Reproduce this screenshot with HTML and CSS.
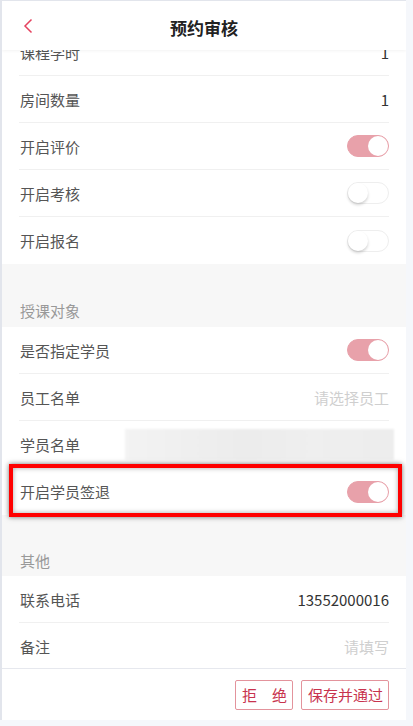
FILE: index.html
```html
<html lang="zh-CN">
  <head>
    <meta charset="UTF-8" />
    <meta name="viewport" content="width=device-width, initial-scale=1.0" />
    <title>预约审核</title>
    <link rel="stylesheet" href="styles.css">
  </head>
  <body>
    <div class="phone">
      <!-- 顶部导航 -->
      <div class="nav">
        <a class="back" href="#" aria-label="返回">
          <svg width="10" height="16" viewBox="0 0 10 16">
            <path d="M8.5 1.5 L2 8 L8.5 14.5" fill="none" stroke="#e5425f" stroke-width="1.5" />
          </svg>
        </a>
        <strong class="title">预约审核</strong>
      </div>

      <div class="scroll">
        <div class="list">
          <div class="group">
            <div class="row"><span class="label">课程学时</span><span class="value">1</span></div>
            <div class="row"><span class="label">房间数量</span><span class="value">1</span></div>
            <div class="row"><span class="label">开启评价</span><span class="switch on"></span></div>
            <div class="row"><span class="label">开启考核</span><span class="switch"></span></div>
            <div class="row"><span class="label">开启报名</span><span class="switch"></span></div>
          </div>

          <div class="group-title first">授课对象</div>
          <div class="group">
            <div class="row"><span class="label">是否指定学员</span><span class="switch on"></span></div>
            <div class="row"><span class="label">员工名单</span><span class="placeholder">请选择员工</span></div>
            <div class="row"><span class="label">学员名单</span><span class="masked"></span></div>
            <div class="row marked"><span class="label">开启学员签退</span><span class="switch on"></span></div>
          </div>

          <div class="group-title">其他</div>
          <div class="group">
            <div class="row"><span class="label">联系电话</span><span class="value">13552000016</span></div>
            <div class="row"><span class="label">备注</span><span class="placeholder">请填写</span></div>
          </div>
        </div>
      </div>

      <!-- 底部操作 -->
      <div class="footer">
        <button class="btn">拒&#12288;绝</button>
        <button class="btn">保存并通过</button>
      </div>
    </div>
  </body>
</html>
```

FILE: styles.css
```css
body {
  margin: 0;
  background: #f5f7fb;
  font-family: "Noto Sans CJK SC", "Noto Sans", sans-serif;
}

.phone {
  box-sizing: border-box;
  width: 406px;
  height: 720px;
  border-left: 2px solid #e2e5ec;
  border-top: 1px solid #e2e5ec;
  background: #f7f7f7;
  display: flex;
  flex-direction: column;
  overflow: hidden;
}

/* 顶部导航 */
.nav {
  position: relative;
  z-index: 2;
  flex: 0 0 49px;
  box-sizing: border-box;
  padding-top: 3px;
  display: flex;
  align-items: center;
  justify-content: center;
  background: #fff;
  box-shadow: 0 1px 3px rgba(0, 0, 0, 0.05);
}
.nav .back {
  position: absolute;
  left: 21px;
  top: 17px;
  display: flex;
}
.nav .title {
  font-size: 17px;
  font-weight: bold;
  color: #222;
}

.scroll {
  flex: 1;
  overflow: hidden;
}
.list {
  margin-top: -21px; /* 已经往上滚了一点 */
}

.group {
  background: #fff;
  padding: 0 17px;
}
.group-title {
  height: 61px;
  box-sizing: border-box;
  padding: 35px 0 0 18px;
  font-size: 15px;
  line-height: 22px;
  color: #999;
}
.group-title.first {
  height: 63px;
  padding-top: 36px;
}

.row {
  height: 47px;
  box-sizing: border-box;
  display: flex;
  align-items: center;
  justify-content: space-between;
  border-bottom: 1px solid #f0f0f0;
}
.row:last-child {
  border-bottom: none;
}
.label {
  font-size: 15px;
  color: #555;
  padding-left: 1px;
}
.value {
  font-size: 15px;
  color: #333;
}
.placeholder {
  font-size: 15px;
  color: #cfcfcf;
}

/* 开关 */
.switch {
  position: relative;
  box-sizing: border-box;
  width: 42px;
  height: 22px;
  border-radius: 11px;
  border: 1px solid #eeeeee;
  background: #fff;
}
.switch::after {
  content: "";
  position: absolute;
  top: 0;
  left: 0;
  width: 20px;
  height: 20px;
  border-radius: 50%;
  background: #fff;
  box-shadow: 0 2px 3px rgba(0, 0, 0, 0.18);
}
.switch.on {
  background: #e8a1aa;
  border-color: #e8a1aa;
}
.switch.on::after {
  left: 20px;
  box-shadow: none;
}

/* 学员名单 打码区域 */
.masked {
  width: 269px;
  height: 31px;
  margin-right: -5px;
  background: linear-gradient(90deg, #f3f3f3, #ececec 45%, #efefef 70%, #ededed);
  filter: blur(1px);
}

/* 红框标注 */
.row.marked {
  position: relative;
}
.row.marked::after {
  content: "";
  position: absolute;
  top: -4px;
  bottom: -2px;
  left: -10px;
  right: -13px;
  border: 4px solid #f00;
  box-shadow: 0 0 5px rgba(0, 0, 0, 0.55), inset 0 0 5px rgba(0, 0, 0, 0.35);
  pointer-events: none;
}

/* 底部按钮 */
.footer {
  flex: 0 0 52px;
  box-sizing: border-box;
  border-top: 1px solid #e6e8ee;
  background: #fff;
  display: flex;
  justify-content: flex-end;
  align-items: flex-start;
  gap: 8px;
  padding: 11px 17px 0 0;
}
.btn {
  height: 30px;
  padding: 0 5px 0 6px;
  border: 1px solid #e3939c;
  border-radius: 2px;
  background: #fff;
  color: #c8334e;
  font-family: "Noto Sans CJK SC", sans-serif;
  font-size: 15px;
  line-height: 28px;
}
```
